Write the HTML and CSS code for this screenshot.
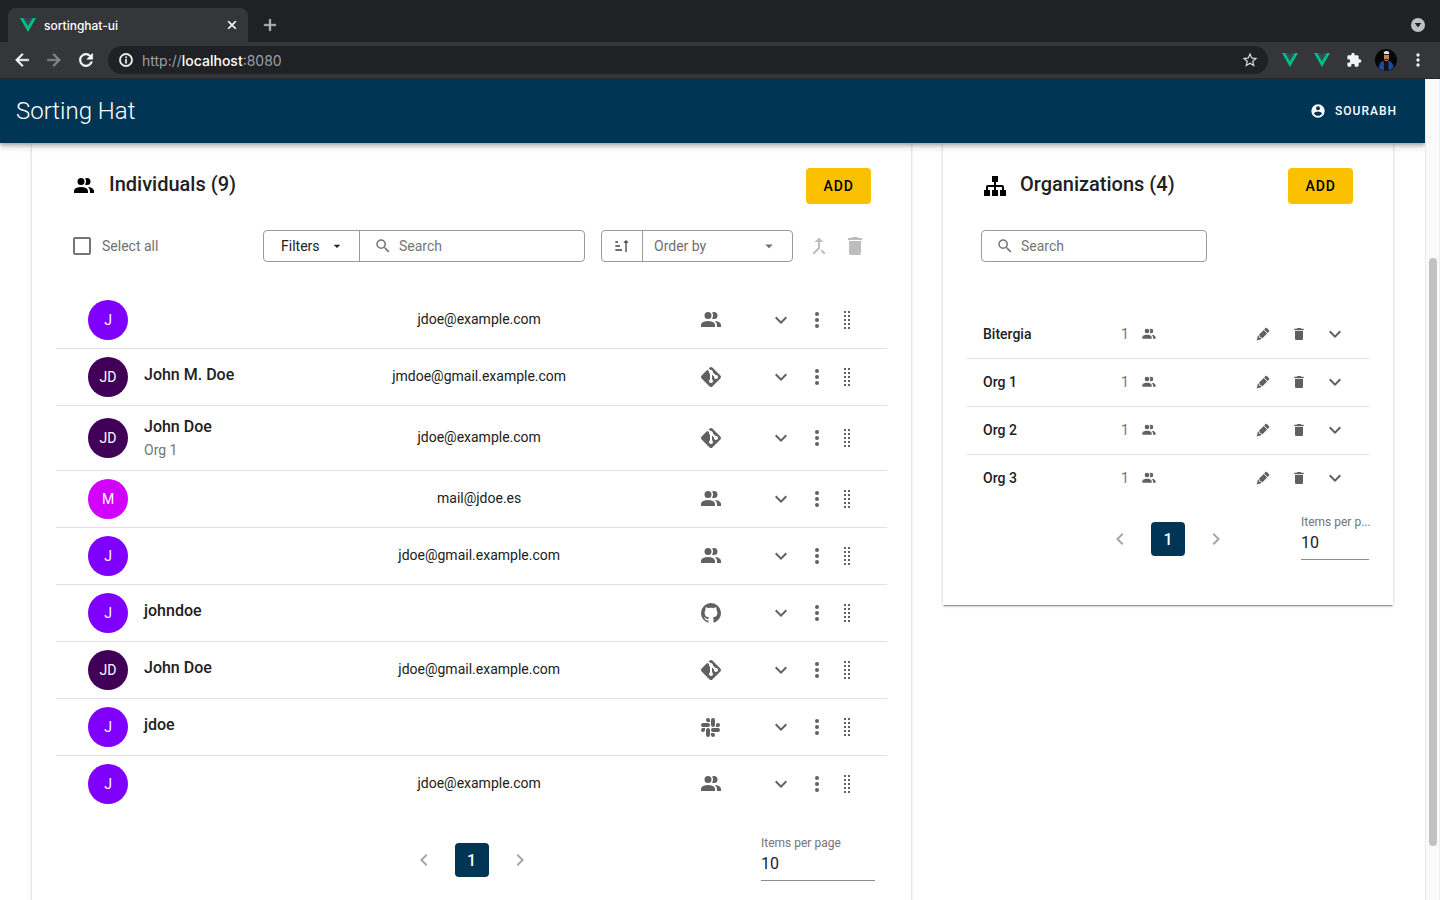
FILE: index.html
```
<!DOCTYPE html>
<html lang="en">
<head>
<meta charset="utf-8">
<title>sortinghat-ui</title>
<link rel="stylesheet" href="styles.css">
</head>
<body>
<svg class="sprite" aria-hidden="true">
  <symbol id="people" viewBox="0 0 24 24"><path d="M16 17V19H2V17S2 13 9 13 16 17 16 17M12.5 7.5A3.5 3.5 0 1 0 9 11A3.5 3.5 0 0 0 12.5 7.5M15.94 13A5.32 5.32 0 0 1 18 17V19H22V17S22 13.37 15.94 13M15 4A3.39 3.39 0 0 0 13.07 4.59A5 5 0 0 1 13.07 10.41A3.39 3.39 0 0 0 15 11A3.5 3.5 0 0 0 15 4Z"/></symbol>
  <symbol id="git" viewBox="0 0 24 24"><path d="M2.6,10.59L8.38,4.8L10.07,6.5C9.83,7.35 10.22,8.28 11,8.73V14.27C10.4,14.61 10,15.26 10,16A2,2 0 0,0 12,18A2,2 0 0,0 14,16C14,15.26 13.6,14.61 13,14.27V9.41L15.07,11.5C15,11.65 15,11.82 15,12A2,2 0 0,0 17,14A2,2 0 0,0 19,12A2,2 0 0,0 17,10C16.82,10 16.65,10 16.5,10.07L13.93,7.5C14.19,6.57 13.71,5.55 12.78,5.16C12.35,5 11.9,4.96 11.5,5.07L9.8,3.38L10.59,2.6C11.37,1.81 12.63,1.81 13.41,2.6L21.4,10.59C22.19,11.37 22.19,12.63 21.4,13.41L13.41,21.4C12.63,22.19 11.37,22.19 10.59,21.4L2.6,13.41C1.81,12.63 1.81,11.37 2.6,10.59Z"/></symbol>
  <symbol id="github" viewBox="0 0 24 24"><path d="M12,2A10,10 0 0,0 2,12C2,16.42 4.87,20.17 8.84,21.5C9.34,21.58 9.5,21.27 9.5,21C9.5,20.77 9.5,20.14 9.5,19.31C6.73,19.91 6.14,17.97 6.14,17.97C5.68,16.81 5.03,16.5 5.03,16.5C4.12,15.88 5.1,15.9 5.1,15.9C6.1,15.97 6.63,16.93 6.63,16.93C7.5,18.45 8.97,18 9.54,17.76C9.63,17.11 9.89,16.67 10.17,16.42C7.95,16.17 5.62,15.31 5.62,11.5C5.62,10.39 6,9.5 6.65,8.79C6.55,8.54 6.2,7.5 6.75,6.15C6.75,6.15 7.59,5.88 9.5,7.17C10.29,6.95 11.15,6.84 12,6.84C12.85,6.84 13.71,6.95 14.5,7.17C16.41,5.88 17.25,6.15 17.25,6.15C17.8,7.5 17.45,8.54 17.35,8.79C18,9.5 18.38,10.39 18.38,11.5C18.38,15.32 16.04,16.16 13.81,16.41C14.17,16.72 14.5,17.33 14.5,18.26C14.5,19.6 14.5,20.68 14.5,21C14.5,21.27 14.66,21.59 15.17,21.5C19.14,20.16 22,16.42 22,12A10,10 0 0,0 12,2Z"/></symbol>
  <symbol id="slack" viewBox="0 0 24 24"><path d="M6,15A2,2 0 0,1 4,17A2,2 0 0,1 2,15A2,2 0 0,1 4,13H6V15M7,15A2,2 0 0,1 9,13A2,2 0 0,1 11,15V20A2,2 0 0,1 9,22A2,2 0 0,1 7,20V15M9,7A2,2 0 0,1 7,5A2,2 0 0,1 9,3A2,2 0 0,1 11,5V7H9M9,8A2,2 0 0,1 11,10A2,2 0 0,1 9,12H4A2,2 0 0,1 2,10A2,2 0 0,1 4,8H9M17,10A2,2 0 0,1 19,8A2,2 0 0,1 21,10A2,2 0 0,1 19,12H17V10M16,10A2,2 0 0,1 14,12A2,2 0 0,1 12,10V5A2,2 0 0,1 14,3A2,2 0 0,1 16,5V10M14,18A2,2 0 0,1 16,20A2,2 0 0,1 14,22A2,2 0 0,1 12,20V18H14M14,17A2,2 0 0,1 12,15A2,2 0 0,1 14,13H19A2,2 0 0,1 21,15A2,2 0 0,1 19,17H14Z"/></symbol>
  <symbol id="down" viewBox="0 0 24 24"><path d="M7.41,8.58L12,13.17L16.59,8.58L18,10L12,16L6,10L7.41,8.58Z"/></symbol>
  <symbol id="left" viewBox="0 0 24 24"><path d="M15.41,16.58L10.83,12L15.41,7.41L14,6L8,12L14,18L15.41,16.58Z"/></symbol>
  <symbol id="right" viewBox="0 0 24 24"><path d="M8.59,16.58L13.17,12L8.59,7.41L10,6L16,12L10,18L8.59,16.58Z"/></symbol>
  <symbol id="dots" viewBox="0 0 24 24"><circle cx="12" cy="6" r="2"/><circle cx="12" cy="12" r="2"/><circle cx="12" cy="18" r="2"/></symbol>
  <symbol id="drag" viewBox="0 0 24 24"><path d="M9 3h2v2H9zM13 3h2v2h-2zM9 7h2v2H9zM13 7h2v2h-2zM9 11h2v2H9zM13 11h2v2h-2zM9 15h2v2H9zM13 15h2v2h-2zM9 19h2v2H9zM13 19h2v2h-2z"/></symbol>
  <symbol id="sitemap" viewBox="0 0 24 24"><path d="M9,2V8H11V11H5C3.89,11 3,11.89 3,13V16H1V22H7V16H5V13H11V16H9V22H15V16H13V13H19V16H17V22H23V16H21V13C21,11.89 20.11,11 19,11H13V8H15V2H9Z"/></symbol>
  <symbol id="search" viewBox="0 0 24 24"><path d="M9.5,3A6.5,6.5 0 0,1 16,9.5C16,11.11 15.41,12.59 14.44,13.73L14.71,14H15.5L20.5,19L19,20.5L14,15.5V14.71L13.73,14.44C12.59,15.41 11.11,16 9.5,16A6.5,6.5 0 0,1 3,9.5A6.5,6.5 0 0,1 9.5,3M9.5,5C7,5 5,7 5,9.5C5,12 7,14 9.5,14C12,14 14,12 14,9.5C14,7 12,5 9.5,5Z"/></symbol>
  <symbol id="pencil" viewBox="0 0 24 24"><path d="M16.84,2.73C16.45,2.73 16.07,2.88 15.77,3.17L13.65,5.29L18.95,10.6L21.07,8.5C21.67,7.89 21.67,6.94 21.07,6.36L17.9,3.17C17.6,2.88 17.22,2.73 16.84,2.73M12.94,6L4.84,14.11L7.4,14.39L7.58,16.68L9.86,16.85L10.15,19.41L18.25,11.3M4.25,15.04L2.5,21.73L9.2,19.94L8.96,17.78L6.65,17.61L6.47,15.29Z"/></symbol>
  <symbol id="trash" viewBox="0 0 24 24"><path d="M19,4H15.5L14.5,3H9.5L8.5,4H5V6H19M6,19A2,2 0 0,0 8,21H16A2,2 0 0,0 18,19V7H6V19Z"/></symbol>
  <symbol id="merge" viewBox="0 0 24 24"><path d="M17,20.41L18.41,19L15,15.59L13.59,17M7.5,8H11V13.59L5.59,19L7,20.41L13,14.41V8H16.5L12,3.5"/></symbol>
  <symbol id="sort" viewBox="0 0 24 24"><path d="M19 7H22L18 3L14 7H17V21H19M2 17H12V19H2M6 5V7H2V5M2 11H9V13H2V11Z"/></symbol>
  <symbol id="caret" viewBox="0 0 24 24"><path d="M7,10L12,15L17,10H7Z"/></symbol>
  <symbol id="account" viewBox="0 0 24 24"><path d="M12,19.2C9.5,19.2 7.29,17.92 6,16C6.03,14 10,12.9 12,12.9C14,12.9 17.97,14 18,16C16.71,17.92 14.5,19.2 12,19.2M12,5A3,3 0 0,1 15,8A3,3 0 0,1 12,11A3,3 0 0,1 9,8A3,3 0 0,1 12,5M12,2A10,10 0 0,0 2,12A10,10 0 0,0 12,22A10,10 0 0,0 22,12C22,6.47 17.5,2 12,2Z"/></symbol>
  <symbol id="puzzle" viewBox="0 0 24 24"><path d="M20.5,11H19V7C19,5.89 18.1,5 17,5H13V3.5A2.5,2.5 0 0,0 10.5,1A2.5,2.5 0 0,0 8,3.5V5H4A2,2 0 0,0 2,7V10.8H3.5C5,10.8 6.2,12 6.2,13.5C6.2,15 5,16.2 3.5,16.2H2V20A2,2 0 0,0 4,22H7.8V20.5C7.8,19 9,17.8 10.5,17.8C12,17.8 13.2,19 13.2,20.5V22H17A2,2 0 0,0 19,20V16H20.5A2.5,2.5 0 0,0 23,13.5A2.5,2.5 0 0,0 20.5,11Z"/></symbol>
  <symbol id="star" viewBox="0 0 24 24"><path d="M12,15.39L8.24,17.66L9.23,13.38L5.91,10.5L10.29,10.13L12,6.09L13.71,10.13L18.09,10.5L14.77,13.38L15.76,17.66M22,9.24L14.81,8.63L12,2L9.19,8.63L2,9.24L7.45,13.97L5.82,21L12,17.27L18.18,21L16.54,13.97L22,9.24Z"/></symbol>
  <symbol id="reload" viewBox="0 0 24 24"><path d="M17.65 6.35C16.2 4.9 14.21 4 12 4c-4.42 0-7.99 3.58-7.99 8s3.57 8 7.99 8c3.73 0 6.84-2.55 7.73-6h-2.08c-.82 2.33-3.04 4-5.65 4-3.31 0-6-2.69-6-6s2.69-6 6-6c1.66 0 3.14.69 4.22 1.78L13 11h7V4l-2.35 2.35z" stroke="currentColor" stroke-width=".6"/></symbol>
  <symbol id="back" viewBox="0 0 24 24"><path d="M20,11V13H8L13.5,18.5L12.08,19.92L4.16,12L12.08,4.08L13.5,5.5L8,11H20Z" stroke="currentColor" stroke-width=".6"/></symbol>
  <symbol id="forward" viewBox="0 0 24 24"><path d="M4,11V13H16L10.5,18.5L11.92,19.92L19.84,12L11.92,4.08L10.5,5.5L16,11H4Z" stroke="currentColor" stroke-width=".6"/></symbol>
  <symbol id="info" viewBox="0 0 24 24"><path d="M11,9H13V7H11M12,20C7.59,20 4,16.41 4,12C4,7.59 7.59,4 12,4C16.41,4 20,7.59 20,12C20,16.41 16.41,20 12,20M12,2A10,10 0 0,0 2,12A10,10 0 0,0 12,22A10,10 0 0,0 22,12A10,10 0 0,0 12,2M11,17H13V11H11V17Z" stroke="currentColor" stroke-width=".7"/></symbol>
  <symbol id="close" viewBox="0 0 24 24"><path d="M19,6.41L17.59,5L12,10.59L6.41,5L5,6.41L10.59,12L5,17.59L6.41,19L12,13.41L17.59,19L19,17.59L13.41,12L19,6.41Z" stroke="currentColor"/></symbol>
  <symbol id="plus" viewBox="0 0 24 24"><path d="M19,13H13V19H11V13H5V11H11V5H13V11H19V13Z" stroke="currentColor" stroke-width=".5"/></symbol>
  <symbol id="vue" viewBox="0 0 16 14"><path fill="#35495e" d="M3 0h3.400L8 2.800 9.600 0H13L8 8.500z"/><path fill="#00c180" d="M0 0h3.200L8 8.300 12.800 0H16L8 14z"/></symbol>
  <symbol id="tabmenu" viewBox="0 0 14 14"><circle cx="7" cy="7" r="7" fill="#bdc1c6"/><path fill="#202124" d="M3.700 5h6.600L7 9.500z"/></symbol>
</svg>

<header class="browser">
  <div class="tabs">
    <div class="tab">
      <svg class="vue"><use href="#vue"/></svg>
      <span class="tab-title">sortinghat-ui</span>
      <button class="plain" aria-label="Close tab"><svg class="i14"><use href="#close"/></svg></button>
    </div>
    <button class="plain new-tab" aria-label="New tab"><svg class="i20"><use href="#plus"/></svg></button>
    <button class="plain tab-search" aria-label="Search tabs"><svg class="i14"><use href="#tabmenu"/></svg></button>
  </div>
  <nav class="toolbar">
    <button class="plain" aria-label="Back"><svg class="i20"><use href="#back"/></svg></button>
    <button class="plain dim" aria-label="Forward" disabled><svg class="i20"><use href="#forward"/></svg></button>
    <button class="plain" aria-label="Reload"><svg class="i20"><use href="#reload"/></svg></button>
    <div class="address">
      <svg class="i16"><use href="#info"/></svg>
      <span class="url">http://<b>localhost</b>:8080</span>
      <button class="plain star" aria-label="Bookmark"><svg class="i18"><use href="#star"/></svg></button>
    </div>
    <div class="extensions">
      <button class="plain" aria-label="Vue devtools"><svg class="vue"><use href="#vue"/></svg></button>
      <button class="plain" aria-label="Vue devtools beta"><svg class="vue"><use href="#vue"/></svg></button>
      <button class="plain" aria-label="Extensions"><svg class="i16"><use href="#puzzle"/></svg></button>
      <button class="plain" aria-label="Profile"><svg class="avatar22" viewBox="0 0 22 22"><circle cx="11" cy="11" r="11" fill="#050608"/><path fill="#1b4b9c" d="M4 19.500c0-5 2-7 4-7.500l3 2 3-2c2.500.500 4.500 3 4.500 6.500A11 11 0 0 1 4 19.500z"/><path fill="#10131c" d="M9 13h4.500v8.700H9z"/><path fill="#c18258" d="M9 5.500h5V9c0 2-1 3.300-2.500 3.300S9 11 9 9z"/><path fill="#e8e2d8" d="M8.800 3.500c1-2 4.400-2 5.400 0L14 5H9z"/><path fill="#2a1a14" d="M9 5h5v1H9zM10 10h3v1h-3z"/></svg></button>
      <button class="plain" aria-label="Menu"><svg class="i20"><use href="#dots"/></svg></button>
    </div>
  </nav>
</header>

<div class="viewport">
  <div class="app">
    <header class="appbar">
      <h1>Sorting Hat</h1>
      <button class="user"><svg class="i16"><use href="#account"/></svg>Sourabh</button>
    </header>
    <main class="board">
      <section class="card individuals">
        <div class="card-head">
          <svg class="i24"><use href="#people"/></svg>
          <h2>Individuals (9)</h2>
          <button class="add">Add</button>
        </div>
        <div class="controls">
          <label class="select-all"><input type="checkbox">Select all</label>
          <div class="box filter">
            <button class="filter-button">Filters<svg class="i16"><use href="#caret"/></svg></button>
            <label class="search"><svg class="i18"><use href="#search"/></svg><input type="text" placeholder="Search" aria-label="Search individuals"></label>
          </div>
          <div class="box order">
            <button class="sort" aria-label="Sort direction"><svg class="i16"><use href="#sort"/></svg></button>
            <div class="order-field"><select aria-label="Order by"><option>Order by</option></select><svg class="i18"><use href="#caret"/></svg></div>
          </div>
          <div class="bulk">
            <button class="plain" aria-label="Merge" disabled><svg class="i24"><use href="#merge"/></svg></button>
            <button class="plain" aria-label="Delete" disabled><svg class="i24"><use href="#trash"/></svg></button>
          </div>
        </div>
        <table class="people">
          <tbody id="people-rows"></tbody>
        </table>
        <div class="pager">
          <div class="pages">
            <button class="plain" aria-label="Previous page" disabled><svg class="i24"><use href="#left"/></svg></button>
            <button class="page">1</button>
            <button class="plain" aria-label="Next page" disabled><svg class="i24"><use href="#right"/></svg></button>
          </div>
          <div class="per-page">
            <label for="individuals-size">Items per page</label>
            <select id="individuals-size"><option>10</option></select>
          </div>
        </div>
      </section>

      <section class="card organizations">
        <div class="card-head">
          <svg class="i24"><use href="#sitemap"/></svg>
          <h2>Organizations (4)</h2>
          <button class="add">Add</button>
        </div>
        <div class="controls">
          <div class="box">
            <label class="search"><svg class="i18"><use href="#search"/></svg><input type="text" placeholder="Search" aria-label="Search organizations"></label>
          </div>
        </div>
        <table class="orgs">
          <tbody id="org-rows"></tbody>
        </table>
        <div class="pager">
          <div class="pages">
            <button class="plain" aria-label="Previous page" disabled><svg class="i24"><use href="#left"/></svg></button>
            <button class="page">1</button>
            <button class="plain" aria-label="Next page" disabled><svg class="i24"><use href="#right"/></svg></button>
          </div>
          <div class="per-page">
            <label for="organizations-size">Items per p...</label>
            <select id="organizations-size"><option>10</option></select>
          </div>
        </div>
      </section>
    </main>
  </div>
  <div class="track" aria-hidden="true"><div class="thumb"></div></div>
</div>
<script src="app.js"></script>
</body>
</html>
```
FILE: styles.css
```
* { box-sizing: border-box; }
body {
  margin: 0;
  height: 100vh;
  display: flex;
  flex-direction: column;
  overflow: hidden;
  font-family: Roboto, "Liberation Sans", sans-serif;
  font-size: 14px;
  color: #212121;
  background: #fff;
}
button, input, select { font: inherit; color: inherit; margin: 0; }
svg { display: block; flex: none; fill: currentColor; }
.sprite { position: absolute; width: 0; height: 0; }
.i14 { width: 14px; height: 14px; }
.i16 { width: 16px; height: 16px; }
.i18 { width: 18px; height: 18px; }
.i20 { width: 20px; height: 20px; }
.i24 { width: 24px; height: 24px; }
.vue { width: 16px; height: 14px; }
.avatar22 { width: 22px; height: 22px; }
.plain { display: flex; align-items: center; justify-content: center; padding: 0; border: 0; background: none; }

/* Browser frame */
.browser { flex: none; font-family: Inter, "Liberation Sans", sans-serif; background: #202124; color: #fff; }
.tabs { display: flex; align-items: center; height: 42px; padding: 8px 15px 0 8px; }
.tab {
  display: flex;
  align-items: center;
  width: 240px;
  height: 34px;
  padding: 0 9px 0 12px;
  gap: 8px;
  border-radius: 8px 8px 0 0;
  background: #35363a;
  font-size: 12px;
  font-weight: 500;
}
.tab-title { flex: 1; }
.new-tab { margin-left: 12px; color: #bdc1c6; }
.tab-search { margin-left: auto; }
.toolbar {
  display: flex;
  align-items: center;
  gap: 12px;
  height: 37px;
  padding: 0 6px 0 12px;
  border-bottom: 1px solid #28292c;
  background: #35363a;
}
.dim { color: #86888c; }
.address {
  flex: 1;
  display: flex;
  align-items: center;
  height: 28px;
  margin-right: -6px;
  padding: 0 9px 0 10px;
  gap: 8px;
  border-radius: 14px;
  background: #202124;
}
.star { margin-left: auto; color: #dadce0; }
.url { font-size: 14px; color: #9aa0a6; }
.url b { font-weight: 500; color: #fff; }
.extensions { display: flex; align-items: center; }
.extensions .plain { width: 32px; color: #f1f3f4; }

/* Page frame */
.viewport { flex: 1; min-height: 0; display: flex; }
.app { flex: 1; min-width: 0; overflow: hidden; }
.appbar {
  position: relative;
  z-index: 1;
  display: flex;
  align-items: center;
  justify-content: space-between;
  height: 64px;
  padding: 0 28px 0 16px;
  background: #003556;
  color: #fff;
  box-shadow: 0 2px 4px rgba(0, 0, 0, .3), 0 4px 8px rgba(0, 0, 0, .12);
}
.appbar h1 { margin: 0; font-size: 24px; font-weight: 300; }
.user {
  display: flex;
  align-items: center;
  gap: 9px;
  padding: 0;
  border: 0;
  background: none;
  font-size: 12px;
  font-weight: 500;
  letter-spacing: 1px;
  text-transform: uppercase;
}
.track {
  flex: none;
  display: flex;
  flex-direction: column;
  width: 15px;
  padding: 0 2px 0 3px;
  border-left: 1px solid #e8e8e8;
  border-right: 1px solid #ededed;
  background: #fafafa;
}
.track::before { content: ""; flex: 179; }
.track::after { content: ""; flex: 54; }
.thumb { flex: 588; border-radius: 4px; background: #c1c1c1; }

/* Cards */
.board {
  display: grid;
  grid-template-columns: 879fr 450fr;
  align-items: start;
  gap: 32px;
  padding: 0 32px;
}
.card {
  min-width: 0;
  padding: 25px 24px 24px;
  background: #fff;
  box-shadow: 0 2px 1px -1px rgba(0, 0, 0, .3), 0 1px 3px rgba(0, 0, 0, .24);
}
.individuals { min-height: 900px; }
.card-head { display: flex; align-items: center; gap: 13px; height: 36px; padding: 0 16px; color: #000; }
.card-head h2 { flex: 1; margin: 0; padding-bottom: 4px; font-size: 20px; font-weight: 500; color: #212121; }
.add {
  height: 36px;
  padding: 0 17px;
  border: 0;
  border-radius: 4px;
  background: #fbc000;
  color: #000;
  font-weight: 500;
  letter-spacing: 1px;
  text-transform: uppercase;
}
.controls { display: flex; align-items: center; height: 32px; margin-top: 26px; padding: 0 20px 0 14px; }
.select-all { flex: 1; display: flex; align-items: center; gap: 11px; padding-left: 3px; color: #707070; }
.select-all input { appearance: none; width: 18px; height: 18px; border: 2px solid #757575; border-radius: 2px; background: #fff; }
.box { display: flex; height: 32px; border: 1px solid #9a9a9a; border-radius: 4px; overflow: hidden; }
.filter { width: 322px; }
.filter-button { display: flex; align-items: center; gap: 9px; width: 96px; padding: 0 0 0 17px; border: 0; border-right: 1px solid #9a9a9a; background: none; }
.search { flex: 1; display: flex; align-items: center; gap: 7px; padding-left: 14px; color: #757575; }
.search input { flex: 1; min-width: 0; height: 28px; padding: 0; border: 0; outline: 0; background: none; }
.search input::placeholder { color: #757575; opacity: 1; }
.order { width: 192px; margin-left: 16px; }
.sort { display: flex; align-items: center; justify-content: center; width: 41px; padding: 0; border: 0; border-right: 1px solid #9a9a9a; background: none; color: #424242; }
.order-field { flex: 1; display: flex; align-items: center; padding: 0 14px 0 11px; color: #707070; }
.order-field select, .per-page select { appearance: none; flex: 1; min-width: 0; width: 100%; padding: 0; border: 0; outline: 0; border-radius: 0; background: none; }
.bulk { display: flex; gap: 12px; margin-left: 14px; color: #bdbdbd; }

table { width: 100%; border-collapse: separate; border-spacing: 0; table-layout: fixed; }
td { padding: 0; vertical-align: middle; }
tr:not(:last-child) td { border-bottom: 1px solid #e0e0e0; }
.actions { display: flex; align-items: center; color: #616161; }

.people { margin-top: 30px; }
.people td { padding: 8px 0; }
.people .who { width: 30%; }
.people .source { width: 116px; color: #616161; }
.people .source svg { margin: 0 auto; }
.people .tools { width: 118px; }
.people .email { padding: 7px 0 9px; text-align: center; }
.people .actions { margin-left: -6px; }
.people .actions button { width: 36px; }
.people .actions .drag { width: 24px; }
.identity { display: flex; align-items: center; gap: 16px; padding-left: 32px; }
.avatar { flex: none; width: 40px; height: 40px; border-radius: 50%; line-height: 40px; text-align: center; color: #fff; }
.names { display: flex; flex-direction: column; padding: 1px 0; }
.names strong { font-size: 16px; line-height: 24px; font-weight: 500; }
.names strong:last-child { padding-bottom: 4px; }
.names span { line-height: 22px; color: #757575; }

.organizations .controls .box { width: 226px; }
.orgs { margin-top: 49px; }
.orgs td { height: 48px; padding-bottom: 2px; }
.orgs .org { padding-left: 16px; font-weight: 500; }
.orgs .count { width: 124px; }
.orgs .count div { display: flex; align-items: center; gap: 12px; color: #757575; }
.orgs .count svg { color: #616161; }
.orgs .tools { width: 124px; }
.orgs .actions button { width: 36px; }

.pager { display: grid; grid-template-columns: 1fr auto 1fr; align-items: center; margin-top: 21px; }
.pages { grid-column: 2; display: flex; align-items: center; gap: 19px; padding-top: 6px; color: #a6a6a6; }
.page { width: 34px; height: 34px; padding: 0; border: 0; border-radius: 4px; background: #003556; color: #fff; font-size: 16px; font-weight: 500; }
.per-page { justify-self: end; width: 68px; border-bottom: 1px solid #8c8c8c; }
.per-page label { display: block; white-space: nowrap; font-size: 12px; line-height: 20px; color: #757575; }
.per-page select { display: block; height: 20px; margin-bottom: 7px; font-size: 16px; }
.individuals .per-page { width: 114px; margin-right: 12px; }
.organizations .pager { margin-top: 9px; margin-bottom: 21px; }
```
FILE: app.js
```
const people = [
  ["J", "#8000ff", "", "", "jdoe@example.com", "people"],
  ["JD", "#410057", "John M. Doe", "", "jmdoe@gmail.example.com", "git"],
  ["JD", "#410057", "John Doe", "Org 1", "jdoe@example.com", "git"],
  ["M", "#d100ff", "", "", "mail@jdoe.es", "people"],
  ["J", "#8000ff", "", "", "jdoe@gmail.example.com", "people"],
  ["J", "#8000ff", "johndoe", "", "", "github"],
  ["JD", "#410057", "John Doe", "", "jdoe@gmail.example.com", "git"],
  ["J", "#8000ff", "jdoe", "", "", "slack"],
  ["J", "#8000ff", "", "", "jdoe@example.com", "people"]
];
const orgs = [["Bitergia", 1], ["Org 1", 1], ["Org 2", 1], ["Org 3", 1]];

const icon = (id, size) => `<svg class="i${size}"><use href="#${id}"/></svg>`;
const action = (id, size, label, extra = "") =>
  `<button class="plain ${extra}" aria-label="${label}">${icon(id, size)}</button>`;

document.getElementById("people-rows").innerHTML = people.map(([initials, color, name, org, email, source]) => `
  <tr>
    <td class="who"><div class="identity">
      <span class="avatar" style="background:${color}">${initials}</span>
      <div class="names">${name ? `<strong>${name}</strong>` : ""}${org ? `<span>${org}</span>` : ""}</div>
    </div></td>
    <td class="email">${email}</td>
    <td class="source">${icon(source, 24)}</td>
    <td class="tools"><div class="actions">
      ${action("down", 24, "Expand")}${action("dots", 24, "More")}${action("drag", 24, "Move", "drag")}
    </div></td>
  </tr>`).join("");

document.getElementById("org-rows").innerHTML = orgs.map(([name, count]) => `
  <tr>
    <td class="org">${name}</td>
    <td class="count"><div>${count}${icon("people", 16)}</div></td>
    <td class="tools"><div class="actions">
      ${action("pencil", 16, "Edit")}${action("trash", 16, "Delete")}${action("down", 24, "Expand")}
    </div></td>
  </tr>`).join("");
```
